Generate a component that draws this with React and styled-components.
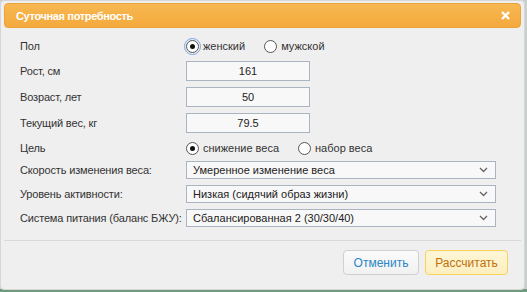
import React, { useState } from "react";
import styled, { createGlobalStyle } from "styled-components";

const Global = createGlobalStyle`
  html, body {
    margin: 0;
    padding: 0;
  }
  body {
    width: 527px;
    height: 292px;
    overflow: hidden;
    background: linear-gradient(to bottom, #c9cfcb 0, #c9cfcb 289px, #6f9a7c 289px);
    font-family: "Liberation Sans", Arial, sans-serif;
  }
`;

const Dialog = styled.div`
  box-sizing: border-box;
  width: 525px;
  height: 290px;
  background: #efefef;
  border: 1px solid #d6d6d6;
  border-radius: 4px;
  padding: 2px;
  display: flex;
  flex-direction: column;
`;

const TitleBar = styled.div`
  box-sizing: border-box;
  height: 25px;
  margin: 0 1px;
  border: 1px solid #eca23a;
  border-radius: 4px;
  background: linear-gradient(to bottom, #f7b851, #f4a93c);
  display: flex;
  align-items: center;
  justify-content: space-between;
  padding: 0 10px 0 11px;
  color: #fff;
`;

const Title = styled.span`
  font-size: 11px;
  font-weight: bold;
  letter-spacing: -0.35px;
`;

const Close = styled.span`
  display: flex;
`;

const Form = styled.div`
  display: flex;
  flex-direction: column;
  padding: 8px 0 0 17px;
`;

const Row = styled.div`
  display: grid;
  grid-template-columns: 166px 1fr;
  align-items: center;
  height: ${(p) => p.$h}px;
  margin-top: ${(p) => p.$mt || 0}px;
  font-size: 11px;
  color: #333;
`;

const Label = styled.span`
  white-space: nowrap;
  letter-spacing: -0.15px;
`;

const Radios = styled.div`
  display: flex;
  align-items: center;
  gap: ${(p) => p.$gap}px;
`;

const RadioLabel = styled.label`
  display: flex;
  align-items: center;
  gap: 4px;
  cursor: pointer;
`;

const RadioCircle = styled.span`
  box-sizing: border-box;
  width: 13px;
  height: 13px;
  border-radius: 50%;
  border: 1px solid #555;
  background: #fff;
  display: flex;
  align-items: center;
  justify-content: center;
  outline: ${(p) => (p.$focus ? "1px solid #7aa6e8" : "none")};
  outline-offset: 1px;
  &::after {
    content: "";
    width: 5px;
    height: 5px;
    border-radius: 50%;
    background: ${(p) => (p.$on ? "#111" : "transparent")};
  }
`;

const TextInput = styled.div`
  box-sizing: border-box;
  width: 124px;
  height: 20px;
  border: 1px solid #aab5c1;
  background: #f8f8f8;
  display: flex;
  align-items: center;
  justify-content: center;
  color: #222;
`;

const Select = styled.div`
  box-sizing: border-box;
  width: 310px;
  height: 18px;
  border: 1px solid #aab5c1;
  background: #f8f8f8;
  display: flex;
  align-items: center;
  justify-content: space-between;
  padding: 0 7px 0 6px;
  color: #222;
`;

const Separator = styled.div`
  height: 1px;
  background: #dadada;
  margin: 13px 1px 0;
`;

const Footer = styled.div`
  display: flex;
  justify-content: flex-end;
  gap: 6px;
  padding: 9px 14px 0 0;
`;

const Button = styled.button`
  box-sizing: border-box;
  width: ${(p) => p.$w}px;
  height: 25px;
  padding: 0;
  border-radius: 4px;
  font-family: inherit;
  font-size: 12px;
  border: 1px solid ${(p) => (p.$primary ? "#f8d25a" : "#d0d0d0")};
  background: ${(p) =>
    p.$primary
      ? "linear-gradient(to bottom, #fdf6d6, #fcefc0)"
      : "linear-gradient(to bottom, #fbfbfb, #f1f1f1)"};
  color: ${(p) => (p.$primary ? "#c2700a" : "#2a86c6")};
`;

const Chevron = () => (
  <svg width="9" height="6" viewBox="0 0 9 6">
    <path d="M1 1l3.5 3.5L8 1" fill="none" stroke="#666" strokeWidth="1.3" />
  </svg>
);

const XIcon = () => (
  <svg width="9" height="9" viewBox="0 0 9 9">
    <path d="M1 1l7 7M8 1L1 8" stroke="#fff" strokeWidth="2.4" />
  </svg>
);

const Radio = ({ on, focus, children, onClick }) => (
  <RadioLabel onClick={onClick}>
    <RadioCircle $on={on} $focus={focus} />
    <span>{children}</span>
  </RadioLabel>
);

export default function App() {
  const [sex, setSex] = useState("f");
  const [goal, setGoal] = useState("lose");

  return (
    <>
      <Global />
      <Dialog>
        <TitleBar>
          <Title>Суточная потребность</Title>
          <Close>
            <XIcon />
          </Close>
        </TitleBar>
        <Form>
          <Row $h={20}>
            <Label>Пол</Label>
            <Radios $gap={19}>
              <Radio on={sex === "f"} focus onClick={() => setSex("f")}>
                женский
              </Radio>
              <Radio on={sex === "m"} onClick={() => setSex("m")}>
                мужской
              </Radio>
            </Radios>
          </Row>
          <Row $h={20} $mt={5}>
            <Label>Рост, см</Label>
            <TextInput>161</TextInput>
          </Row>
          <Row $h={20} $mt={6}>
            <Label>Возраст, лет</Label>
            <TextInput>50</TextInput>
          </Row>
          <Row $h={20} $mt={6}>
            <Label>Текущий вес, кг</Label>
            <TextInput>79.5</TextInput>
          </Row>
          <Row $h={20} $mt={5}>
            <Label>Цель</Label>
            <Radios $gap={19}>
              <Radio on={goal === "lose"} onClick={() => setGoal("lose")}>
                снижение веса
              </Radio>
              <Radio on={goal === "gain"} onClick={() => setGoal("gain")}>
                набор веса
              </Radio>
            </Radios>
          </Row>
          <Row $h={18} $mt={3}>
            <Label>Скорость изменения веса:</Label>
            <Select>
              <span>Умеренное изменение веса</span>
              <Chevron />
            </Select>
          </Row>
          <Row $h={18} $mt={6}>
            <Label>Уровень активности:</Label>
            <Select>
              <span>Низкая (сидячий образ жизни)</span>
              <Chevron />
            </Select>
          </Row>
          <Row $h={18} $mt={6}>
            <Label>Система питания (баланс БЖУ):</Label>
            <Select>
              <span>Сбалансированная 2 (30/30/40)</span>
              <Chevron />
            </Select>
          </Row>
        </Form>
        <Separator />
        <Footer>
          <Button $w={76}>Отменить</Button>
          <Button $w={83} $primary>
            Рассчитать
          </Button>
        </Footer>
      </Dialog>
    </>
  );
}
